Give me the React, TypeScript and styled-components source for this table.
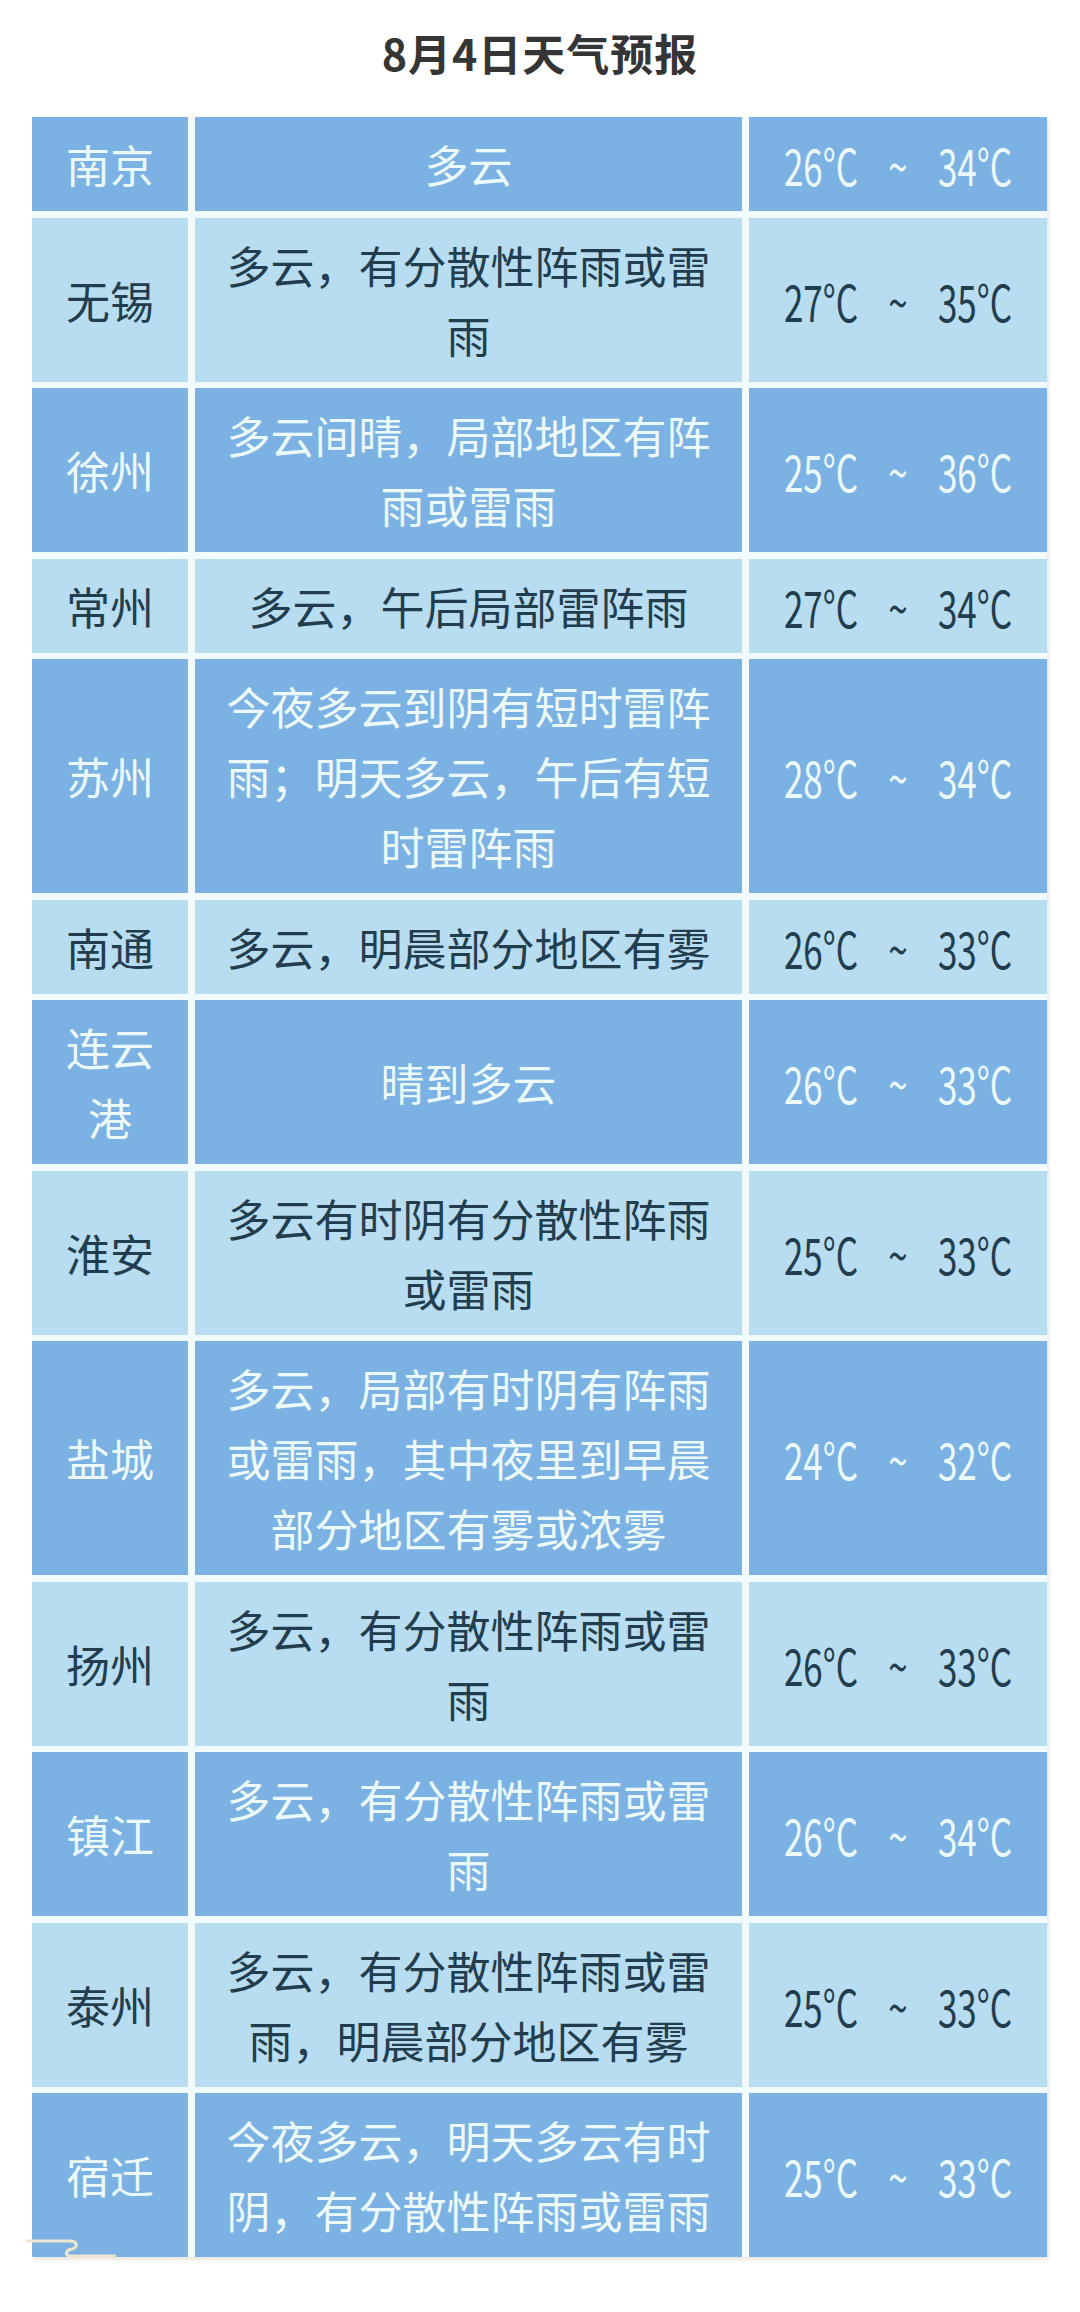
import styled, { createGlobalStyle } from 'styled-components';

const GlobalStyle = createGlobalStyle`
    body {
        margin: 0;
        background: #ffffff;
        font-family: 'Noto Sans CJK SC', 'Noto Sans', sans-serif;
    }
`;

const Page = styled.div`
    width: 1080px;
    height: 2312px;
    background: #ffffff;
    overflow: hidden;
`;

const Header = styled.h1`
    margin: 0;
    height: 104px;
    display: flex;
    align-items: center;
    justify-content: center;
    font-size: 43px;
    font-weight: 700;
    color: #353535;
    letter-spacing: 1px;
`;

const Sheet = styled.div`
    position: relative;
    margin: 13px 0 0 32px;
    width: 1015px;
    display: flex;
    flex-direction: column;
    gap: 6.5px;
    background: #f1fbfd;
    box-shadow: 2px 3px 3px rgba(200, 190, 170, 0.35);
`;

const Row = styled.div`
    display: grid;
    grid-template-columns: 156px 547px 298px;
    column-gap: 7px;
`;

const Cell = styled.div<{ $dark: boolean; $pad?: number }>`
    display: flex;
    align-items: center;
    justify-content: center;
    text-align: center;
    padding: 12px ${(p) => p.$pad ?? 16}px;
    background: ${(p) => (p.$dark ? '#7bb1e3' : '#b8dcf0')};
    color: ${(p) => (p.$dark ? '#ebf9f8' : '#223e4e')};
    font-size: 44px;
    line-height: 70px;
`;

const Temp = styled.span`
    display: inline-block;
    white-space: nowrap;
    font-size: 50px;
    word-spacing: 32px;
    transform: scaleX(0.7);
`;

const Scroll = styled.svg`
    position: absolute;
    left: -6px;
    bottom: -2px;
`;

const rows = [
    ['南京', '多云', '26°C ~ 34°C'],
    ['无锡', '多云，有分散性阵雨或雷雨', '27°C ~ 35°C'],
    ['徐州', '多云间晴，局部地区有阵雨或雷雨', '25°C ~ 36°C'],
    ['常州', '多云，午后局部雷阵雨', '27°C ~ 34°C'],
    ['苏州', '今夜多云到阴有短时雷阵雨；明天多云，午后有短时雷阵雨', '28°C ~ 34°C'],
    ['南通', '多云，明晨部分地区有雾', '26°C ~ 33°C'],
    ['连云港', '晴到多云', '26°C ~ 33°C'],
    ['淮安', '多云有时阴有分散性阵雨或雷雨', '25°C ~ 33°C'],
    ['盐城', '多云，局部有时阴有阵雨或雷雨，其中夜里到早晨部分地区有雾或浓雾', '24°C ~ 32°C'],
    ['扬州', '多云，有分散性阵雨或雷雨', '26°C ~ 33°C'],
    ['镇江', '多云，有分散性阵雨或雷雨', '26°C ~ 34°C'],
    ['泰州', '多云，有分散性阵雨或雷雨，明晨部分地区有雾', '25°C ~ 33°C'],
    ['宿迁', '今夜多云，明天多云有时阴，有分散性阵雨或雷雨', '25°C ~ 33°C'],
];

const App = () => {
    return (
        <Page>
            <GlobalStyle />
            <Header>8月4日天气预报</Header>
            <Sheet>
                {rows.map(([city, desc, temp], i) => {
                    const dark = i % 2 === 0;
                    return (
                        <Row key={city}>
                            <Cell $dark={dark} $pad={20}>{city}</Cell>
                            <Cell $dark={dark} $pad={26}>{desc}</Cell>
                            <Cell $dark={dark} $pad={0}>
                                <Temp>{temp}</Temp>
                            </Cell>
                        </Row>
                    );
                })}
                <Scroll width="90" height="22" viewBox="0 0 90 22">
                    <path
                        d="M0 4 H44 C52 4 52 11 46 12 C40 13 38 18 44 19 H90"
                        fill="none"
                        stroke="#efe6cf"
                        strokeWidth="3"
                        strokeLinecap="round"
                    />
                </Scroll>
            </Sheet>
        </Page>
    );
};

export default App;
